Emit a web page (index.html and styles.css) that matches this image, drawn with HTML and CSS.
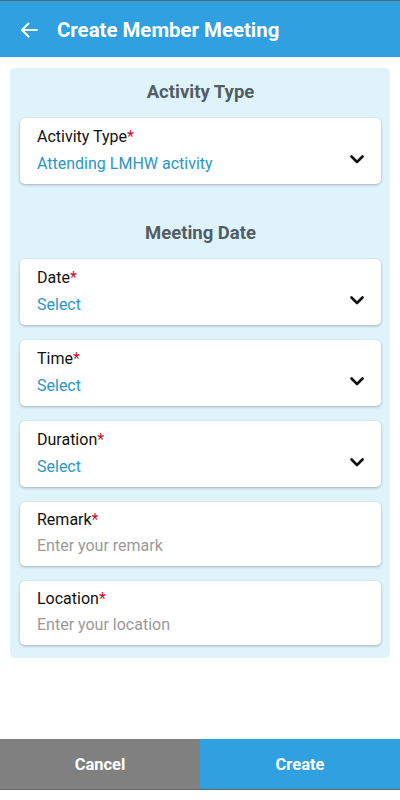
FILE: index.html
```html
<!DOCTYPE html>
<html lang="en">
<head>
    <meta charset="UTF-8">
    <meta name="viewport" content="width=device-width, initial-scale=1.0">
    <title>Create Member Meeting</title>
    <link rel="stylesheet" href="styles.css">
</head>
<body>
    <header class="app-bar">
        <svg class="back" width="18" height="16" viewBox="0 0 18 16">
            <path d="M17 8H2M8.5 1.5L2 8l6.5 6.5" fill="none" stroke="#fff" stroke-width="2" stroke-linecap="round" stroke-linejoin="round"/>
        </svg>
        <h1>Create Member Meeting</h1>
    </header>

    <main class="panel">
        <h2 class="section-title">Activity Type</h2>
        <div class="field">
            <div class="field-text">
                <div class="label">Activity Type<span class="req">*</span></div>
                <div class="value">Attending LMHW activity</div>
            </div>
            <svg class="chevron" width="14" height="9" viewBox="0 0 14 9"><path d="M1.5 1.5L7 7l5.5-5.5" fill="none" stroke="#111" stroke-width="2.6" stroke-linecap="round" stroke-linejoin="round"/></svg>
        </div>

        <h2 class="section-title spaced">Meeting Date</h2>
        <div class="field">
            <div class="field-text">
                <div class="label">Date<span class="req">*</span></div>
                <div class="value">Select</div>
            </div>
            <svg class="chevron" width="14" height="9" viewBox="0 0 14 9"><path d="M1.5 1.5L7 7l5.5-5.5" fill="none" stroke="#111" stroke-width="2.6" stroke-linecap="round" stroke-linejoin="round"/></svg>
        </div>
        <div class="field">
            <div class="field-text">
                <div class="label">Time<span class="req">*</span></div>
                <div class="value">Select</div>
            </div>
            <svg class="chevron" width="14" height="9" viewBox="0 0 14 9"><path d="M1.5 1.5L7 7l5.5-5.5" fill="none" stroke="#111" stroke-width="2.6" stroke-linecap="round" stroke-linejoin="round"/></svg>
        </div>
        <div class="field">
            <div class="field-text">
                <div class="label">Duration<span class="req">*</span></div>
                <div class="value">Select</div>
            </div>
            <svg class="chevron" width="14" height="9" viewBox="0 0 14 9"><path d="M1.5 1.5L7 7l5.5-5.5" fill="none" stroke="#111" stroke-width="2.6" stroke-linecap="round" stroke-linejoin="round"/></svg>
        </div>
        <div class="field input">
            <div class="field-text">
                <div class="label">Remark<span class="req">*</span></div>
                <div class="placeholder">Enter your remark</div>
            </div>
        </div>
        <div class="field input">
            <div class="field-text">
                <div class="label">Location<span class="req">*</span></div>
                <div class="placeholder">Enter your location</div>
            </div>
        </div>
    </main>

    <footer class="actions">
        <button class="btn cancel">Cancel</button>
        <button class="btn create">Create</button>
    </footer>
</body>
</html>
```

FILE: styles.css
```css
/* Create meeting form */
body {
    margin: 0;
    min-height: 100vh;
    display: flex;
    flex-direction: column;
    font-family: Roboto, "Noto Sans", sans-serif;
    background: #fff;
    box-sizing: border-box;
}

.app-bar {
    display: flex;
    align-items: center;
    box-sizing: border-box;
    height: 57px;
    padding: 2px 0 0 20px;
    background: #2fa0e0;
    border-top: 1px solid #5b6b76;
}

.app-bar h1 {
    margin: 0 0 0 19px;
    font-size: 20.4px;
    font-weight: 700;
    color: #fff;
}

.panel {
    margin: 11px 10px 0 10px;
    padding: 11px 9px 13px 10px;
    background: #dff3fa;
    border-radius: 5px;
    display: flex;
    flex-direction: column;
    gap: 15px;
}

.section-title {
    margin: 0;
    padding-top: 2px;
    text-align: center;
    font-size: 18.5px;
    line-height: 22px;
    font-weight: 700;
    color: #525e66;
}

.section-title.spaced {
    margin-top: 21px;
}

.field {
    display: flex;
    align-items: center;
    background: #fff;
    border-radius: 5px;
    box-shadow: 0 1px 3px rgba(0, 0, 0, 0.28);
    padding: 9px 17px;
}

.field.input {
    padding: 8px 17px 9px;
}

.field-text {
    flex: 1;
}

.label {
    font-size: 16px;
    line-height: 20px;
    color: #111;
}

.req {
    color: #c8102e;
}

.value {
    margin-top: 5px;
    font-size: 16px;
    line-height: 23px;
    color: #2a96c6;
}

.placeholder {
    margin-top: 4px;
    font-size: 16px;
    line-height: 23px;
    color: #9a9a9a;
}

.chevron {
    margin-top: 16px;
}

.actions {
    margin-top: auto;
    margin-bottom: 10px;
    display: grid;
    grid-template-columns: 1fr 1fr;
    border-bottom: 1px solid #666;
}

.btn {
    height: 50px;
    border: none;
    font-family: inherit;
    font-size: 16.5px;
    font-weight: 700;
    color: #fff;
}

.cancel {
    background: #808080;
}

.create {
    background: #2fa0e0;
}
```
